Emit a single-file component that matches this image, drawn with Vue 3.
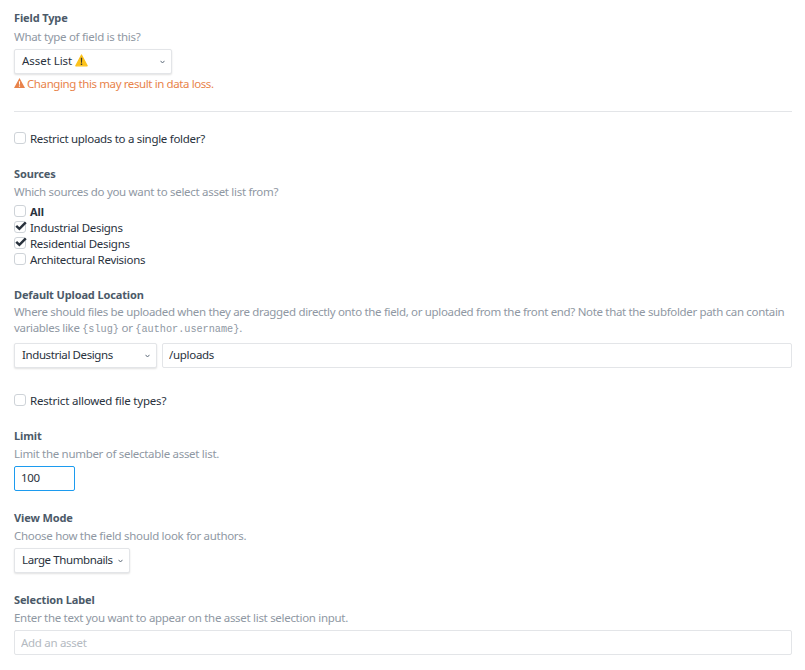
<script setup>
const sources = [
  { name: 'All', checked: false, bold: true },
  { name: 'Industrial Designs', checked: true },
  { name: 'Residential Designs', checked: true },
  { name: 'Architectural Revisions', checked: false }
]
</script>

<template>
  <div class="page">
    <section class="field first">
      <div class="label">Field Type</div>
      <div class="hint">What type of field is this?</div>
      <div class="select w-type">
        <span class="value"><span class="asset">Asset List</span>
          <svg class="emoji" width="13" height="13" viewBox="0 0 13 13"><path d="M6.5 1 12.2 11.8H.8Z" fill="#fcc21b" stroke="#fcc21b" stroke-width="1.2" stroke-linejoin="round"/><path d="M5.8 3.8h1.4l-.2 5H6ZM5.8 9.6h1.4v1.5H5.8Z" fill="#3f3a2a"/></svg>
        </span>
        <svg class="chev" width="5" height="4" viewBox="0 0 5 4"><path d="M.5.8 2.5 3 4.500.8" fill="none" stroke="#606d7b" stroke-width="1"/></svg>
      </div>
      <div class="warning">
        <svg width="11" height="10" viewBox="0 0 11 10"><path fill-rule="evenodd" d="M5.5 0 11 10H0ZM4.9 3.2h1.2l-.2 3.6h-.8ZM4.9 7.6h1.2v1.2H4.9Z" fill="#e8834a"/></svg>
        <span>Changing this may result in data loss.</span>
      </div>
    </section>

    <hr class="rule" />

    <label class="check-row single">
      <span class="box"></span>
      <span>Restrict uploads to a single folder?</span>
    </label>

    <section class="field sources">
      <div class="label">Sources</div>
      <div class="hint">Which sources do you want to select asset list from?</div>
      <div class="options">
        <label v-for="s in sources" :key="s.name" class="check-row">
          <span class="box">
            <svg v-if="s.checked" class="tick" width="12" height="10" viewBox="0 0 12 10"><path d="M1.2 4.8 4.4 7.8 10.8 1.4" fill="none" stroke="#29323d" stroke-width="2.5"/></svg>
          </span>
          <span :class="{ strong: s.bold }">{{ s.name }}</span>
        </label>
      </div>
    </section>

    <section class="field upload">
      <div class="label">Default Upload Location</div>
      <div class="hint para">
        <div>Where should files be uploaded when they are dragged directly onto the field, or uploaded from the front end? Note that the subfolder path can contain</div>
        <div class="vars">variables like <code>{slug}</code> or <code>{author.username}</code>.</div>
      </div>
      <div class="upload-row">
        <div class="select w-loc">
          <span class="value">Industrial Designs</span>
          <svg class="chev" width="5" height="4" viewBox="0 0 5 4"><path d="M.5.8 2.5 3 4.500.8" fill="none" stroke="#606d7b" stroke-width="1"/></svg>
        </div>
        <input class="input grow" value="/uploads" />
      </div>
    </section>

    <label class="check-row single second">
      <span class="box"></span>
      <span>Restrict allowed file types?</span>
    </label>

    <section class="field limit">
      <div class="label">Limit</div>
      <div class="hint">Limit the number of selectable asset list.</div>
      <input class="input focus" value="100" />
    </section>

    <section class="field view">
      <div class="label">View Mode</div>
      <div class="hint">Choose how the field should look for authors.</div>
      <div class="select w-view">
        <span class="value">Large Thumbnails</span>
        <svg class="chev" width="5" height="4" viewBox="0 0 5 4"><path d="M.5.8 2.5 3 4.500.8" fill="none" stroke="#606d7b" stroke-width="1"/></svg>
      </div>
    </section>

    <section class="field view">
      <div class="label">Selection Label</div>
      <div class="hint">Enter the text you want to appear on the asset list selection input.</div>
      <input class="input wide" placeholder="Add an asset" />
    </section>
  </div>
</template>

<style>
html, body { margin: 0; background: #fff; }
</style>

<style scoped>
.page {
  box-sizing: border-box;
  width: 805px;
  height: 670px;
  padding: 10px 13px 0 14px;
  overflow: hidden;
  font-family: "Noto Sans", "Open Sans", sans-serif;
  font-size: 11.5px;
  letter-spacing: -0.3px;
  color: #29323d;
  background: #fff;
}
.label { height: 16px; line-height: 16px; font-size: 11px; font-weight: 700; letter-spacing: -0.13px; color: #4c5a69; }
.hint { height: 18px; line-height: 18px; margin-top: 1px; color: #8f98a3; }
.first .hint { margin-top: 2px; }
.hint.para { height: 32px; line-height: 16px; margin-top: 1px; letter-spacing: -0.33px; white-space: nowrap; }
.vars { letter-spacing: -0.32px; }
code { font-family: "Liberation Mono", monospace; font-size: 10.2px; line-height: 1; letter-spacing: 0; }

.select {
  box-sizing: border-box;
  height: 25px;
  display: flex;
  align-items: center;
  justify-content: space-between;
  padding: 0 6px 2px 7px;
  margin-top: 3px;
  background: #fff;
  border: 1px solid #e3e5e8;
  border-radius: 2px;
  box-shadow: 0 1px 2px rgba(0,0,0,.12);
  flex: none;
  white-space: nowrap;
  letter-spacing: -0.4px;
}
.value { display: inline-flex; align-items: center; gap: 3px; line-height: 20px; }
.asset { letter-spacing: -0.05px; }
.w-type { width: 158px; }
.w-loc { width: 143px; margin-top: 0; }
.w-view { width: 116px; }
.chev { flex: none; margin-top: 2px; }

.warning { height: 18px; margin-top: 0; display: flex; align-items: center; gap: 2px; color: #e8834a; letter-spacing: -0.4px; }

.rule { margin: 19px 0 0; border: 0; border-top: 1px solid #e3e5e8; width: 778px; }

.check-row { display: flex; align-items: center; height: 16px; gap: 4px; }
.check-row.single { margin-top: 18px; }
.check-row.second { margin-top: 24px; letter-spacing: -0.2px; }
.box {
  position: relative;
  box-sizing: border-box;
  width: 12px;
  height: 12px;
  flex: none;
  background: #fff;
  border: 1px solid #ced3d8;
  border-radius: 3px;
}
.tick { position: absolute; left: 0; top: -1px; }
.strong { font-weight: 700; font-size: 11px; letter-spacing: -0.1px; }

.sources { margin-top: 20px; }
.options { margin-top: 2px; }
.upload { margin-top: 20px; }
.upload-row { display: flex; gap: 5px; align-items: center; margin-top: 7px; }

.input {
  box-sizing: border-box;
  display: block;
  height: 25px;
  padding: 0 6px 2px;
  margin: 0;
  font: inherit;
  letter-spacing: inherit;
  color: #29323d;
  background: #fff;
  border: 1px solid #e3e5e8;
  border-radius: 2px;
  outline: none;
}
.input::placeholder { color: #b4bac1; opacity: 1; }
.grow { flex: 1; height: 25px; }
.focus { width: 61px; margin-top: 3px; border-color: #1c9bef; }
.wide { width: 100%; margin-top: 3px; padding-bottom: 0; }
.limit { margin-top: 20px; }
.view { margin-top: 19px; }
</style>
